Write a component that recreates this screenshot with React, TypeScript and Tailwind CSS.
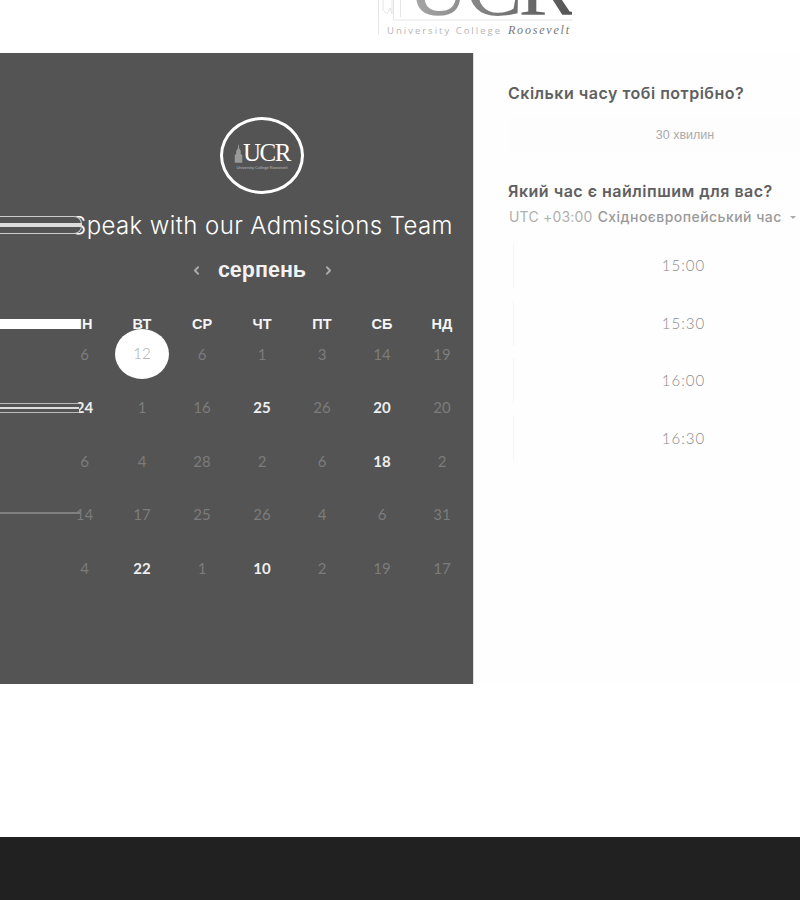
import { ChevronLeft, ChevronRight } from "lucide-react";

const weekDays = ["ПН", "ВТ", "СР", "ЧТ", "ПТ", "СБ", "НД"];

// [day, available]
const days: [number, boolean][][] = [
	[[6, false], [12, false], [6, false], [1, false], [3, false], [14, false], [19, false]],
	[[24, true], [1, false], [16, false], [25, true], [26, false], [20, true], [20, false]],
	[[6, false], [4, false], [28, false], [2, false], [6, false], [18, true], [2, false]],
	[[14, false], [17, false], [25, false], [26, false], [4, false], [6, false], [31, false]],
	[[4, false], [22, true], [1, false], [10, true], [2, false], [19, false], [17, false]],
];

const times = ["15:00", "15:30", "16:00", "16:30"];

function Tower({ className }: { className: string }) {
	return (
		<svg viewBox="0 0 12 26" className={className} fill="currentColor">
			<path d="M6 0l1 7 2 3v4l2 2v10H1V16l2-2v-4l2-3z" />
		</svg>
	);
}

function TopLogo() {
	return (
		<header className="relative h-[53px] overflow-hidden bg-white">
			<div className="ml-[375px] flex w-[200px] flex-col">
				<div className="-mt-[45px] flex h-[63px] items-end justify-end pr-[3px]">
					<span className="bg-linear-to-r from-[#aaa] to-[#555] bg-clip-text font-['Liberation_Serif',serif] text-[86px] leading-[63px] tracking-[-4px] text-transparent">UCR</span>
				</div>
				<div className="ml-[12px] mt-[5px] flex items-baseline whitespace-nowrap font-['Open_Sans',sans-serif] text-[9.5px] leading-[14px] tracking-[2px] text-[#b5b5b5]">
					University College
					<span className="ml-[6px] font-['Liberation_Serif',serif] text-[12px] italic tracking-[1.8px] text-[#777]">Roosevelt</span>
				</div>
			</div>
			<svg viewBox="0 0 200 36" className="absolute left-[375px] top-0 h-[36px] w-[200px]" fill="none" stroke="#e6e6e6" strokeWidth="1">
				<path d="M3.5 0v34M8 0v10l4 4 3-6 2 6V0M18.5 0v20h179M25.5 0v17" />
			</svg>
		</header>
	);
}

function CalendarLogo() {
	return (
		<div className="flex h-[77px] w-[84px] flex-col items-center justify-center rounded-[50%] border-[3px] border-white">
			<div className="flex items-center">
				<Tower className="h-[20px] w-[9px] text-[#999]" />
				<span className="font-['Liberation_Serif',serif] text-[25px] leading-[24px] tracking-[-1.5px] text-white">UCR</span>
			</div>
			<span className="whitespace-nowrap font-['Liberation_Sans',sans-serif] text-[4px] leading-[5px] text-[#bbb]">University College Roosevelt</span>
		</div>
	);
}

function Calendar() {
	return (
		<section className="relative h-[631px] w-[474px] shrink-0 overflow-hidden border-r border-[#ddd] bg-[#545454]">
			<div className="ml-[52px] flex w-[420px] flex-col items-center pt-[64px]">
				<CalendarLogo />
				<h1 className="mt-[16px] whitespace-nowrap font-['Inter',sans-serif] text-[24px] font-light leading-[32px] tracking-[0.4px] text-white">
					Speak with our Admissions Team
				</h1>
				<div className="mt-[12px] flex h-[32px] items-center font-['Liberation_Sans',sans-serif] text-[21.5px] font-bold text-[#f2f2f2]">
					<ChevronLeft size={13} strokeWidth={3.5} className="mr-[15px] text-[#aaa]" />
					<span className="w-[89px] text-center">серпень</span>
					<ChevronRight size={13} strokeWidth={3.5} className="ml-[15px] text-[#aaa]" />
				</div>
				<div className="mt-[33px] grid w-full grid-cols-7">
					{weekDays.map((d) => (
						<div key={d} className="h-[8px] translate-y-[0.5px] text-center font-['Liberation_Sans',sans-serif] text-[14.5px] font-bold leading-[8px] text-[#f5f5f5]">
							{d}
						</div>
					))}
					{days.flat().map(([day, available], i) => (
						<div key={i} className={i % 7 === 0 ? "flex h-[53.5px] items-center justify-center pl-[5px] font-['Lato',sans-serif] text-[15px]" : "flex h-[53.5px] items-center justify-center font-['Lato',sans-serif] text-[15px]"}>
							{i === 1 ? (
								<span className="flex h-[50px] w-[54px] items-center justify-center rounded-[50%] bg-white pb-[2px] font-light text-[#aaa]">{day}</span>
							) : (
								<span className={available ? "font-bold text-[#eee]" : "text-[#7c7c7c]"}>{day}</span>
							)}
						</div>
					))}
				</div>
			</div>

			{/* stretched edge pixels over the left of the panel */}
			<div className="absolute left-0 top-[163px] h-[18px] w-[82px] rounded-r-[8px] border-y border-r border-[#ccc] bg-[#545454]" />
			<div className="absolute left-0 top-[170px] h-[4px] w-[82px] bg-[#ddd]" />
			<div className="absolute left-0 top-[266px] h-[10px] w-[80px] bg-white" />
			<div className="absolute left-0 top-[350px] h-[10px] w-[79px] border-y border-[#bbb] bg-[#545454]" />
			<div className="absolute left-0 top-[354px] h-[2px] w-[79px] bg-[#ddd]" />
			<div className="absolute left-0 top-[459px] h-[2px] w-[80px] bg-[#808080]" />
		</section>
	);
}

function Scheduler() {
	return (
		<section className="w-[327px] shrink-0 bg-[#fefefe] pl-[34px] font-['Inter',sans-serif]">
			<h2 className="mt-[29px] whitespace-nowrap text-[16px] font-semibold leading-[22px] tracking-[0.5px] text-[#606060]">Скільки часу тобі потрібно?</h2>
			<div className="mt-[13px] flex h-[35px] w-[354px] items-center justify-center bg-[#fdfdfd] pt-[2px] font-['Liberation_Sans',sans-serif] text-[12.5px] text-[#aaa]">30 хвилин</div>
			<h2 className="mt-[28px] whitespace-nowrap text-[16px] font-semibold leading-[22px] tracking-[0.5px] text-[#606060]">Який час є найліпшим для вас?</h2>
			<div className="mt-[5px] flex items-center whitespace-nowrap text-[14px] leading-[20px] text-[#b0b0b0]">
				<span className="ml-px tracking-[0.2px]">UTC +03:00</span>
				<span className="ml-[5px] font-medium tracking-[0.45px] text-[#999]">Східноєвропейський час</span>
				<span className="ml-[8px] h-0 w-0 border-x-[3px] border-t-[3px] border-x-transparent border-t-[#aaa]" />
			</div>
			<div className="ml-[5px] mt-[16px] flex w-[340px] flex-col gap-[12.5px]">
				{times.map((t) => (
					<div key={t} className="flex h-[45px] items-center justify-center border-l border-[#f5f5f5] font-['Lato',sans-serif] text-[15px] font-light tracking-[1px] text-[#8a8a8a]">
						{t}
					</div>
				))}
			</div>
		</section>
	);
}

export default function App() {
	return (
		<div className="flex h-[900px] flex-col overflow-hidden bg-white">
			<TopLogo />
			<main className="flex h-[631px]">
				<Calendar />
				<Scheduler />
			</main>
			<div className="h-[153px]" />
			<footer className="h-[63px] bg-[#212121]" />
		</div>
	);
}
